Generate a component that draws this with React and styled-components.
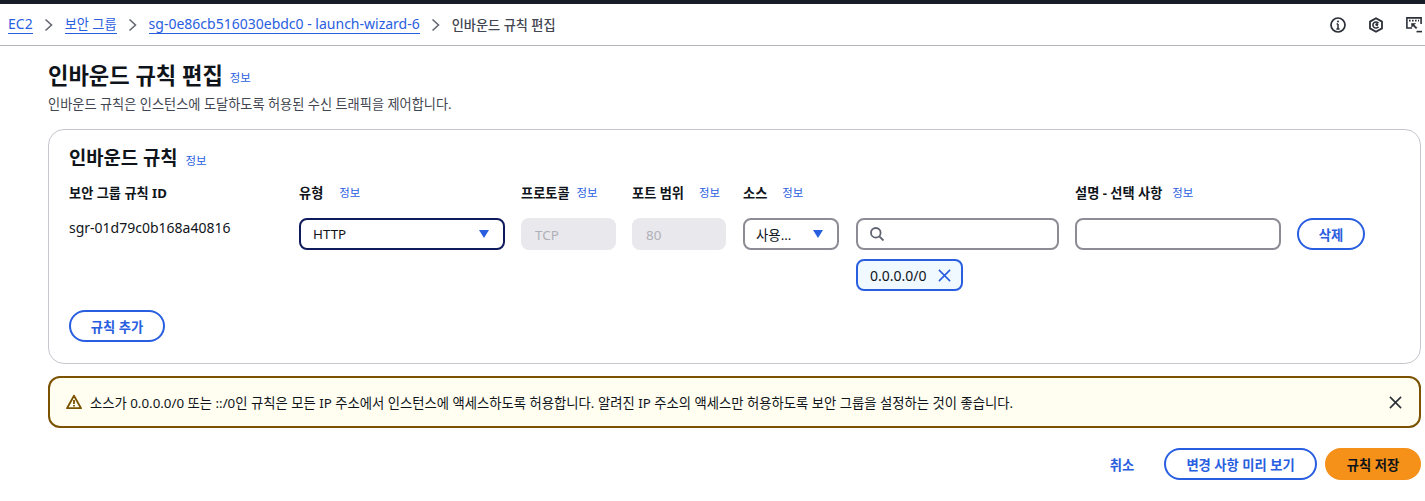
import React from "react";
import styled, { createGlobalStyle } from "styled-components";

const Global = createGlobalStyle`
  html, body { margin: 0; padding: 0; background: #fff; }
  body {
    font-family: "Noto Sans", "Noto Sans CJK KR", sans-serif;
    font-size: 14px;
    color: #0f141a;
    overflow: hidden;
  }
`;

const Page = styled.div`
  width: 1425px;
  height: 501px;
  border-top: 4px solid #161d26;
  box-sizing: border-box;
`;

const TopBar = styled.div`
  height: 42px;
  box-sizing: border-box;
  border-bottom: 1px solid #b4b4bb;
  display: flex;
  align-items: center;
  justify-content: space-between;
  padding: 0 3px 0 8px;
`;

const Crumbs = styled.nav`
  display: flex;
  align-items: center;
  gap: 10px;
  font-size: 14px;
  line-height: 20px;
`;

const Crumb = styled.a`
  color: #295ee0;
  border-bottom: 1px solid #295ee0;
  font-size: ${(p) => p.$size || 14}px;
  line-height: 18px;
  white-space: nowrap;
`;

const Current = styled.span`
  color: #424650;
  font-size: 13.2px;
  font-weight: 500;
  white-space: nowrap;
`;

const TopIcons = styled.div`
  display: flex;
  align-items: center;
  gap: 22px;
  color: #2b2f38;
`;

const Main = styled.main`
  padding: 15px 4px 0 48px;
`;

const Heading = styled.div`
  display: flex;
  align-items: center;
  gap: ${(p) => p.$gap || 7}px;
`;

const Title = styled.h1`
  margin: 0;
  font-size: 22.2px;
  line-height: 30px;
  font-weight: 700;
  color: #0f141a;
`;

const Info = styled.a`
  color: #295ee0;
  font-size: 11.4px;
  line-height: 14px;
  font-weight: 400;
  white-space: nowrap;
  margin-top: ${(p) => p.$top || 0}px;
`;

const Subtitle = styled.p`
  margin: 4px 0 0;
  font-size: 13.2px;
  line-height: 18px;
  color: #424650;
`;

const Card = styled.section`
  margin-top: 16px;
  height: 235px;
  box-sizing: border-box;
  border: 1px solid #c6c6cd;
  border-radius: 16px;
  padding: 14px 20px 0;
`;

const CardTitle = styled.h2`
  margin: 0;
  font-size: 18.8px;
  line-height: 28px;
  font-weight: 700;
`;

const Grid = styled.div`
  display: grid;
  grid-template-columns: 214px 206px 95px 95px 97px 203px 206px 68px;
  column-gap: 16px;
  margin-top: 9px;
  align-items: start;
`;

const Label = styled.div`
  display: flex;
  align-items: center;
  gap: ${(p) => p.$gap || 6}px;
  height: 22px;
  font-size: 13.2px;
  font-weight: 700;
  color: #0f141a;
  white-space: nowrap;
  margin-bottom: 15px;
`;

const RuleId = styled.div`
  font-size: 14px;
  line-height: 20px;
  color: #0f141a;
`;

const Select = styled.div`
  height: 32px;
  width: ${(p) => (p.$w ? `${p.$w}px` : "auto")};
  box-sizing: border-box;
  border: 2px solid ${(p) => (p.$focus ? "#0f1b5c" : "#8c8c94")};
  border-radius: 8px;
  display: flex;
  align-items: center;
  justify-content: space-between;
  padding: 0 14px 0 ${(p) => (p.$w ? 11 : 12)}px;
  font-size: 13.4px;
`;

const Caret = styled.span`
  width: 0;
  height: 0;
  border-left: 5px solid transparent;
  border-right: 5px solid transparent;
  border-top: 8px solid #295ee0;
`;

const Disabled = styled.div`
  height: 32px;
  width: ${(p) => p.$w}px;
  box-sizing: border-box;
  border-radius: 8px;
  background: #e8e8ed;
  color: #b0b0b7;
  display: flex;
  align-items: center;
  padding: 1px 14px 0;
  font-size: 13.4px;
`;

const Input = styled.div`
  height: 32px;
  box-sizing: border-box;
  border: 2px solid #8c8c94;
  border-radius: 8px;
  display: flex;
  align-items: center;
  padding: 0 11px;
  color: #5f6470;
`;

const Token = styled.div`
  margin-top: 9px;
  width: 107px;
  height: 32px;
  box-sizing: border-box;
  border: 2px solid #295ee0;
  border-radius: 8px;
  background: #f0f9ff;
  display: flex;
  align-items: center;
  gap: 11px;
  padding: 0 9px 0 12px;
  font-size: 14px;
  color: #0f141a;
`;

const Button = styled.button`
  height: 32px;
  box-sizing: border-box;
  width: ${(p) => p.$w}px;
  padding: 0;
  border-radius: 16px;
  border: 2px solid ${(p) => (p.$primary ? "#f59019" : p.$plain ? "transparent" : "#295ee0")};
  background: ${(p) => (p.$primary ? "#f59019" : "#fff")};
  color: ${(p) => (p.$primary ? "#0f141a" : "#295ee0")};
  font-family: inherit;
  font-size: 13.3px;
  font-weight: 600;
  white-space: nowrap;
`;

const AddRow = styled.div`
  margin-top: 19px;
`;

const Alert = styled.div`
  margin-top: 12px;
  height: 52px;
  box-sizing: border-box;
  border: 2px solid #7a5200;
  border-radius: 12px;
  background: #fffef0;
  display: flex;
  align-items: center;
  padding: 0 17px 0 16px;
  font-size: 13.33px;
  color: #0f141a;
`;

const AlertText = styled.span`
  flex: 1;
  margin-left: 8px;
  white-space: nowrap;
`;

const Actions = styled.div`
  margin-top: 20px;
  display: flex;
  justify-content: flex-end;
  align-items: center;
`;

const Cancel = styled(Button)`
  margin-right: 13px;
`;

const Preview = styled(Button)`
  margin-right: 8px;
`;

const Chevron = () => (
  <svg width="12" height="14" viewBox="0 0 12 14" fill="none" stroke="#656871" strokeWidth="1.6">
    <path d="M2.5 1.5 8.5 7l-6 5.5" />
  </svg>
);

const InfoIcon = () => (
  <svg width="16" height="16" viewBox="0 0 16 16" fill="none" stroke="currentColor" strokeWidth="1.7">
    <circle cx="8" cy="8" r="7" />
    <path d="M8 7v5M6.4 12h3.2M6.6 7H8" strokeWidth="1.5" />
    <circle cx="8" cy="4.6" r="1" fill="currentColor" stroke="none" />
  </svg>
);

const HexIcon = () => (
  <svg width="16" height="16" viewBox="0 0 16 16" fill="none" stroke="currentColor" strokeWidth="1.8">
    <path d="M8 1.2 14 4.6v6.8L8 14.8 2 11.4V4.6z" strokeLinejoin="round" />
    <path d="M10.4 6.3A3 3 0 1 0 10.4 9.7" strokeWidth="1.6" />
    <circle cx="8.8" cy="7.4" r="1.5" fill="currentColor" stroke="none" />
  </svg>
);

const ConsoleIcon = () => (
  <svg width="16" height="16" viewBox="0 0 16 16" fill="none" stroke="currentColor">
    <path d="M6 11H.9V.9h14.2V7" strokeWidth="1.6" />
    <path d="M3 3.6h1.6M6 3.6h1.6M9 3.6h1.6M12 3.6h1" strokeWidth="1.6" />
    <path d="M5.5 6.5h4l-1.5 1.2 3 3-1 1-3-3-1.2 1.6z" fill="currentColor" strokeWidth=".6" />
    <path d="M10.5 14.6H16" strokeWidth="1.6" />
  </svg>
);

const SearchIcon = () => (
  <svg width="16" height="16" viewBox="0 0 16 16" fill="none" stroke="currentColor" strokeWidth="1.8">
    <circle cx="6.8" cy="6.8" r="4.8" />
    <path d="m10.3 10.3 4.2 4.2" />
  </svg>
);

const CloseIcon = ({ color, size }) => (
  <svg width={size} height={size} viewBox="0 0 14 14" fill="none" stroke={color} strokeWidth="1.7">
    <path d="m1 1 12 12M13 1 1 13" />
  </svg>
);

const WarnIcon = () => (
  <svg width="16" height="16" viewBox="0 0 16 16" fill="none" stroke="#7a5200" strokeWidth="1.8">
    <path d="M8 1.8 15 14.2H1z" strokeLinejoin="round" />
    <path d="M8 6v4M8 11v1.6" />
  </svg>
);

export default function App() {
  return (
    <Page>
      <Global />
      <TopBar>
        <Crumbs>
          <Crumb>EC2</Crumb>
          <Chevron />
          <Crumb $size={13.2}>보안 그룹</Crumb>
          <Chevron />
          <Crumb>sg-0e86cb516030ebdc0 - launch-wizard-6</Crumb>
          <Chevron />
          <Current>인바운드 규칙 편집</Current>
        </Crumbs>
        <TopIcons>
          <InfoIcon />
          <HexIcon />
          <ConsoleIcon />
        </TopIcons>
      </TopBar>
      <Main>
        <Heading>
          <Title>인바운드 규칙 편집</Title>
          <Info $top={4}>정보</Info>
        </Heading>
        <Subtitle>인바운드 규칙은 인스턴스에 도달하도록 허용된 수신 트래픽을 제어합니다.</Subtitle>
        <Card>
          <Heading $gap={8}>
            <CardTitle>인바운드 규칙</CardTitle>
            <Info $top={5}>정보</Info>
          </Heading>
          <Grid>
            <Label>보안 그룹 규칙 ID</Label>
            <Label $gap={16}>유형 <Info $top={1}>정보</Info></Label>
            <Label $gap={7}>프로토콜 <Info $top={1}>정보</Info></Label>
            <Label $gap={15}>포트 범위 <Info $top={1}>정보</Info></Label>
            <Label $gap={15}>소스 <Info $top={1}>정보</Info></Label>
            <Label />
            <Label $gap={10}>설명 - 선택 사항 <Info $top={1}>정보</Info></Label>
            <Label />

            <RuleId>sgr-01d79c0b168a40816</RuleId>
            <Select $focus>HTTP<Caret /></Select>
            <Disabled $w={95}>TCP</Disabled>
            <Disabled $w={94}>80</Disabled>
            <Select $w={96}>사용...<Caret /></Select>
            <div>
              <Input><SearchIcon /></Input>
              <Token>0.0.0.0/0 <CloseIcon color="#295ee0" size={13} /></Token>
            </div>
            <Input />
            <Button $w={68}>삭제</Button>
          </Grid>
          <AddRow>
            <Button $w={96}>규칙 추가</Button>
          </AddRow>
        </Card>
        <Alert>
          <WarnIcon />
          <AlertText>소스가 0.0.0.0/0 또는 ::/0인 규칙은 모든 IP 주소에서 인스턴스에 액세스하도록 허용합니다. 알려진 IP 주소의 액세스만 허용하도록 보안 그룹을 설정하는 것이 좋습니다.</AlertText>
          <CloseIcon color="#2b2f38" size={13} />
        </Alert>
        <Actions>
          <Cancel $plain $w={58}>취소</Cancel>
          <Preview $w={153}>변경 사항 미리 보기</Preview>
          <Button $primary $w={96}>규칙 저장</Button>
        </Actions>
      </Main>
    </Page>
  );
}
